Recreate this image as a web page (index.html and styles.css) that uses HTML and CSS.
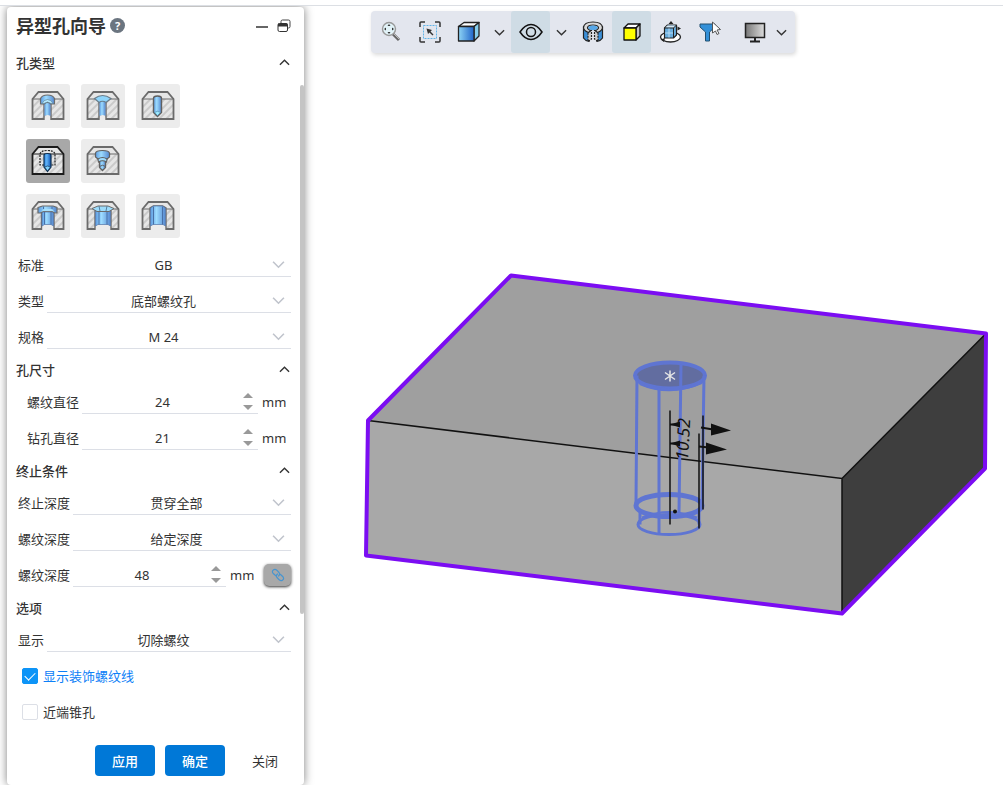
FILE: index.html
```html
<!DOCTYPE html>
<html lang="zh-CN">
<head>
  <meta charset="UTF-8">
  <title>异型孔向导</title>
  <link rel="stylesheet" href="styles.css">
</head>
<body>
  <!-- shared icon parts -->
  <svg class="defs" aria-hidden="true">
    <defs>
      <linearGradient id="steel">
        <stop offset="0" stop-color="#5d9be0"/>
        <stop offset="0.4" stop-color="#9ddcff"/>
        <stop offset="1" stop-color="#5588d0"/>
      </linearGradient>
      <linearGradient id="deep">
        <stop offset="0" stop-color="#2e86e0"/>
        <stop offset="0.4" stop-color="#62b4f8"/>
        <stop offset="1" stop-color="#0c50b0"/>
      </linearGradient>
      <linearGradient id="cubeFace">
        <stop offset="0" stop-color="#8ed4f5"/>
        <stop offset="1" stop-color="#1f63c8"/>
      </linearGradient>
      <linearGradient id="screen">
        <stop offset="0" stop-color="#777"/>
        <stop offset="1" stop-color="#ddd"/>
      </linearGradient>
      <pattern id="hatch" width="5" height="5" patternUnits="userSpaceOnUse" patternTransform="rotate(45)">
        <rect width="5" height="5" fill="#e6e6e6"/>
        <rect width="2" height="5" fill="#cacaca"/>
      </pattern>
      <symbol id="block" viewBox="0 0 44 44">
        <path d="M6.500 15L12.500 8H31.500L37.500 15Z" fill="#e6e6e6"/>
        <path d="M6.500 15H37.500V35H6.500Z" fill="url(#hatch)"/>
        <path d="M6.500 15H37.500" stroke="currentColor"/>
        <path d="M6.500 15L12.500 8H31.500L37.500 15V35H6.500Z" fill="none" stroke="currentColor" stroke-width="1.800"/>
      </symbol>
      <symbol id="chev" viewBox="0 0 12 12">
        <path d="M1 3.500L6 8.500L11 3.500" fill="none" stroke="currentColor" stroke-width="1.500"/>
      </symbol>
    </defs>
  </svg>

  <div class="workspace">
    <aside class="panel">
      <header class="panel-head">
        <h1>异型孔向导</h1>
        <button class="help" aria-label="帮助">?</button>
        <button class="head-btn" aria-label="最小化">
          <svg width="14" height="14" viewBox="0 0 14 14"><path d="M1 8H13" stroke="#333" stroke-width="1.500"/></svg>
        </button>
        <button class="head-btn" aria-label="浮动">
          <svg width="14" height="14" viewBox="0 0 14 14"><path d="M4 4V2.500Q4 1 5.500 1H11.500Q13 1 13 2.500V7.500Q13 9 11.500 9H10.500" fill="none" stroke="#444"/><rect x="1" y="4.500" width="9.500" height="8" rx="1.500" fill="#fff" stroke="#333"/><path d="M1 4.500H10.500V7.500H1Z" fill="#333"/></svg>
        </button>
      </header>

      <section>
        <div class="group-head">
          <h2>孔类型</h2>
          <button class="fold" aria-label="折叠"><svg width="11" height="11"><use href="#chev"/></svg></button>
        </div>
        <div class="hole-types">
          <button class="hole" aria-label="柱形沉头孔">
            <svg viewBox="0 0 44 44"><use href="#block"/>
              <path d="M18 37V33Q21.500 29.500 25 33V37Z" fill="#ececec"/>
              <path d="M18 36V17H25V36" fill="none" stroke="#6b6b6b" stroke-width="1.400"/>
              <path d="M18.500 17H24.500V32Q21.500 30 18.500 32Z" fill="url(#steel)"/>
              <path d="M14.500 14.500Q16 11 21.500 11Q27 11 28.500 14.500V20H25Q21.500 17 18 20H14.500Z" fill="url(#steel)" stroke="#6b6b6b" stroke-width="1.200"/>
              <path d="M16 19.500Q18 15.500 21.500 15.500Q25 15.500 27 19.500L25 19.500Q21.500 16.500 18 19.500Z" fill="#b9ecff" stroke="#5b8095" stroke-width="0.700"/></svg>
          </button>
          <button class="hole" aria-label="锥形沉头孔">
            <svg viewBox="0 0 44 44"><use href="#block"/>
              <path d="M18 37V33Q21.500 29.500 25 33V37Z" fill="#ececec"/>
              <path d="M18 36V17H25V36" fill="none" stroke="#6b6b6b" stroke-width="1.400"/>
              <path d="M18.500 16H24.500V32Q21.500 30 18.500 32Z" fill="url(#steel)"/>
              <path d="M13.500 14.500Q21.500 8.500 30 14.500L25 18.500Q21.500 16 18 18.500Z" fill="#8fd5fb" stroke="#6a7d8a" stroke-width="1.200"/></svg>
          </button>
          <button class="hole" aria-label="孔">
            <svg viewBox="0 0 44 44"><use href="#block"/>
              <path d="M17.500 14.500Q17.500 12 21.500 12Q25.500 12 25.500 14.500V28.500L21.500 32.500L17.500 28.500Z" fill="url(#steel)" stroke="#606060" stroke-width="1.400"/>
              <path d="M18.500 28.500Q21.500 26 24.500 28.500L21.500 31.500Z" fill="#9eeaff" stroke="#4a86a8" stroke-width="0.700"/></svg>
          </button>
          <button class="hole active" aria-label="直螺纹孔">
            <svg viewBox="0 0 44 44"><use href="#block"/>
              <path d="M18 26H14V15Q15 11.500 21.500 11.500Q28 11.500 29 15V26H25" fill="none" stroke="#222" stroke-width="1.200" stroke-dasharray="2 1"/>
              <path d="M18 16Q18 14.500 21.500 14.500Q25 14.500 25 16V28L21.500 32.500L18 28Z" fill="url(#deep)" stroke="#103050" stroke-width="1.200"/>
              <path d="M18.500 28Q21.500 26 24.500 28L21.500 32Z" fill="#7ed0ff" stroke="#103050" stroke-width="0.700"/></svg>
          </button>
          <button class="hole" aria-label="锥形螺纹孔">
            <svg viewBox="0 0 44 44"><use href="#block"/>
              <path d="M18.500 21H24.500V28.500L21.500 31.500L18.500 28.500Z" fill="url(#steel)" stroke="#606060" stroke-width="1.300"/>
              <path d="M18.500 27.500Q21.500 25 24.500 27.500" fill="none" stroke="#606060"/>
              <path d="M16.500 18H26.500L25.500 23Q21.500 20.500 17.500 23Z" fill="#9ddcff" stroke="#606060" stroke-width="1.200"/>
              <path d="M14.500 14Q15 11.500 21.500 11.500Q28 11.500 28.500 14V18L26 20Q21.500 17 17 20L14.500 18Z" fill="url(#steel)" stroke="#606060" stroke-width="1.200"/></svg>
          </button>
          <button class="hole row-start" aria-label="柱孔槽口">
            <svg viewBox="0 0 44 44"><use href="#block"/>
              <path d="M15.500 37V32L18 30.500H25.500L28 32V37Z" fill="#ececec"/>
              <path d="M15.500 36V18H28V36" fill="none" stroke="#6b6b6b" stroke-width="1.400"/>
              <path d="M16 18H27.500V32L25 30.500H18.500L16 32Z" fill="url(#steel)" stroke="#5577aa" stroke-width="0.700"/>
              <path d="M18.500 18V30.500M25 18V30.500" stroke="#4870a8"/>
              <path d="M12 13.500L16.500 12H27L31 13.500V19H28.500L26 17H17.500L14.500 19H12Z" fill="url(#steel)" stroke="#6b6b6b" stroke-width="1.200"/>
              <path d="M15 18Q17 15 19 15H25Q27 15 28.500 18L26 17H17.500Z" fill="#a8e0fb"/>
              <path d="M17.500 12.500V15M26 12.500V15" stroke="#4870a8"/></svg>
          </button>
          <button class="hole" aria-label="锥孔槽口">
            <svg viewBox="0 0 44 44"><use href="#block"/>
              <path d="M14 37V32L17 30.500H27L30 32V37Z" fill="#ececec"/>
              <path d="M14 36V17H30V36" fill="none" stroke="#6b6b6b" stroke-width="1.400"/>
              <path d="M14.500 17H29.500V32L27 30.500H17L14.500 32Z" fill="url(#steel)" stroke="#5577aa" stroke-width="0.700"/>
              <path d="M18 17V30.500M26 17V30.500" stroke="#4870a8"/>
              <path d="M11 14.500L17 12H27L33 14.500L28 17.500H16Z" fill="#9cdcfb" stroke="#6b6b6b"/>
              <path d="M18 12L19 17M26 12L25 17" stroke="#5580a0"/></svg>
          </button>
          <button class="hole" aria-label="槽口">
            <svg viewBox="0 0 44 44"><use href="#block"/>
              <path d="M14 37V32L17 30.500H27L30 32V37Z" fill="#ececec"/>
              <path d="M14 36V14L17.500 12H26.500L30 14V36" fill="none" stroke="#6b6b6b" stroke-width="1.400"/>
              <path d="M14.500 14L17.500 12H26.500L29.500 14V32L27 30.500H17L14.500 32Z" fill="url(#steel)" stroke="#5577aa" stroke-width="0.700"/>
              <path d="M17.500 12.500V30.500M26.500 12.500V30.500" stroke="#4870a8"/></svg>
          </button>
        </div>
        <div class="row">
          <label for="standard">标准</label>
          <div class="field"><select id="standard"><option>GB</option></select><svg class="arrow" width="13" height="13"><use href="#chev"/></svg></div>
        </div>
        <div class="row">
          <label for="type">类型</label>
          <div class="field"><select id="type"><option>底部螺纹孔</option></select><svg class="arrow" width="13" height="13"><use href="#chev"/></svg></div>
        </div>
        <div class="row">
          <label for="size">规格</label>
          <div class="field"><select id="size"><option>M 24</option></select><svg class="arrow" width="13" height="13"><use href="#chev"/></svg></div>
        </div>
      </section>

      <section>
        <div class="group-head">
          <h2>孔尺寸</h2>
          <button class="fold" aria-label="折叠"><svg width="11" height="11"><use href="#chev"/></svg></button>
        </div>
        <div class="row indent">
          <label for="threadDia">螺纹直径</label>
          <div class="field"><input type="text" id="threadDia" value="24">
            <div class="spin"><button class="up" aria-label="增加"></button><button class="down" aria-label="减少"></button></div></div>
          <span class="unit">mm</span>
        </div>
        <div class="row indent">
          <label for="drillDia">钻孔直径</label>
          <div class="field"><input type="text" id="drillDia" value="21">
            <div class="spin"><button class="up" aria-label="增加"></button><button class="down" aria-label="减少"></button></div></div>
          <span class="unit">mm</span>
        </div>
      </section>

      <section>
        <div class="group-head">
          <h2>终止条件</h2>
          <button class="fold" aria-label="折叠"><svg width="11" height="11"><use href="#chev"/></svg></button>
        </div>
        <div class="row">
          <label for="endDepth">终止深度</label>
          <div class="field"><select id="endDepth"><option>贯穿全部</option></select><svg class="arrow" width="13" height="13"><use href="#chev"/></svg></div>
        </div>
        <div class="row">
          <label for="threadMode">螺纹深度</label>
          <div class="field"><select id="threadMode"><option>给定深度</option></select><svg class="arrow" width="13" height="13"><use href="#chev"/></svg></div>
        </div>
        <div class="row">
          <label for="threadDepth">螺纹深度</label>
          <div class="field"><input type="text" id="threadDepth" value="48">
            <div class="spin"><button class="up" aria-label="增加"></button><button class="down" aria-label="减少"></button></div></div>
          <span class="unit">mm</span>
          <button class="link-btn" aria-label="关联">
            <svg width="14" height="14" viewBox="0 0 14 14" fill="none" stroke="#4795d0" stroke-width="1.200" stroke-linecap="round"><path d="M4.500 7.500L2.300 5.500Q0.500 3.500 2.300 2Q4 0.500 5.800 2.200L8 4.500Q9.500 6.500 7.500 8"/><path d="M9.500 6.500L11.700 8.500Q13.500 10.500 11.700 12Q10 13.500 8.200 11.800L6 9.500Q4.500 7.500 6.500 6"/></svg>
          </button>
        </div>
      </section>

      <section>
        <div class="group-head">
          <h2>选项</h2>
          <button class="fold" aria-label="折叠"><svg width="11" height="11"><use href="#chev"/></svg></button>
        </div>
        <div class="row">
          <label for="display">显示</label>
          <div class="field"><select id="display"><option>切除螺纹</option></select><svg class="arrow" width="13" height="13"><use href="#chev"/></svg></div>
        </div>
        <div class="check-row">
          <input type="checkbox" id="cosmetic" checked><label for="cosmetic">显示装饰螺纹线</label>
        </div>
        <div class="check-row">
          <input type="checkbox" id="nearCsk"><label for="nearCsk">近端锥孔</label>
        </div>
      </section>

      <footer class="actions">
        <button class="primary">应用</button>
        <button class="primary">确定</button>
        <button class="plain">关闭</button>
      </footer>
      <div class="scroll-thumb"></div>
    </aside>

    <main class="stage">
      <nav class="toolbar">
        <button class="tool" aria-label="缩放">
          <svg width="24" height="24" viewBox="0 0 24 24"><path d="M14 14L20 20" stroke="#666" stroke-width="3"/><path d="M15 14L20 19" stroke="#bbb"/><circle cx="10" cy="9" r="6.500" fill="#e2f3f8" stroke="#999" stroke-width="1.400"/><path d="M10 4L8.500 6H11.500ZM10 14L8.500 12H11.500ZM5 9L7 7.500V10.500ZM15 9L13 7.500V10.500Z" fill="#333"/></svg>
        </button>
        <button class="tool" aria-label="框选">
          <svg width="24" height="24" viewBox="0 0 24 24" fill="none"><path d="M2 7V3Q2 2 3 2H7M17 2H21Q22 2 22 3V7M22 17V21Q22 22 21 22H17M7 22H3Q2 22 2 21V17" stroke="#333" stroke-width="1.500"/><rect x="5.500" y="5.500" width="13" height="13" stroke="#62b5e8" stroke-dasharray="2 1"/><path d="M8.500 8.500L14 10L12.500 11.500L15.500 14.500L14.500 15.500L11.500 12.500L10 14Z" fill="#333"/></svg>
        </button>
        <button class="tool" aria-label="视图方向">
          <svg width="24" height="24" viewBox="0 0 24 24" stroke="#222" stroke-width="1.300" stroke-linejoin="round"><path d="M1.500 6.500L7 2.500H22L17 6.500Z" fill="#fff"/><path d="M17 6.500L22 2.500V16L17 21Z" fill="#86cdec"/><path d="M1.500 6.500H17V21H1.500Z" fill="url(#cubeFace)"/></svg>
        </button>
        <button class="more" aria-label="更多"><svg width="11" height="11"><use href="#chev"/></svg></button>
        <button class="tool on" aria-label="显示">
          <svg width="24" height="24" viewBox="0 0 24 24" fill="none" stroke="#111" stroke-width="1.500"><path d="M1 12Q6 4.500 12 4.500T23 12Q18 19.500 12 19.500T1 12Z"/><circle cx="12" cy="12" r="4.500"/></svg>
        </button>
        <button class="more" aria-label="更多"><svg width="11" height="11"><use href="#chev"/></svg></button>
        <button class="tool" aria-label="剖面">
          <svg width="24" height="24" viewBox="0 0 24 24" stroke="#222" stroke-width="1.200" stroke-linejoin="round">
            <path d="M2.500 6.500V18Q4 20.500 8 21.500V11H6Z" fill="#3d8fd6"/>
            <path d="M21.500 6.500V18Q20 20.500 16 21.500V11H18Z" fill="#3d8fd6"/>
            <path d="M7 12L10.500 10V19L7 21.500ZM17 12L13.500 10V19L17 21.500Z" fill="#ccc" stroke-dasharray="2 1"/>
            <path d="M7.500 12.500Q2.500 10.500 2.500 7.500Q3 2 12 2T21.500 7.500Q21.500 10.500 16.500 12.500L14 10.500Q17.500 9.500 17.500 7.500Q17 5 12 5T6.500 7.500Q6.500 9.500 10 10.500Z" fill="#d8d8d8"/>
            <path d="M7 7.500Q8 5.500 12 5.500T17 7.500Q16.500 9.500 13.500 10H10.500Q7.500 9.500 7 7.500Z" fill="#58a8e8" stroke="none"/></svg>
        </button>
        <button class="tool on" aria-label="着色">
          <svg width="24" height="24" viewBox="0 0 24 24" stroke="#111" stroke-width="1.300" stroke-linejoin="round"><path d="M4 8L8 4H20L16 8Z" fill="#fff"/><path d="M16 8L20 4V16L16 20Z" fill="#c5c5c5"/><path d="M4 8H16V20H4Z" fill="#ff0"/></svg>
        </button>
        <button class="tool" aria-label="旋转视图">
          <svg width="24" height="24" viewBox="0 0 24 24"><ellipse cx="11.500" cy="17" rx="10" ry="5" fill="#fff" stroke="#222" stroke-width="1.300"/><path d="M5.500 8L8.500 5H17.500V15L14.500 18H5.500Z" fill="#6aaede" stroke="#222" stroke-width="1.200" stroke-linejoin="round"/><path d="M6 7.500L8.500 5.500H17L14.500 8Z" fill="#d5e8f5"/><path d="M5.500 8H14.500V18M14.500 8L17.500 5" fill="none" stroke="#222"/><path d="M6 13H14M10 8.500V17.500" stroke="#b7dcf5"/><path d="M12 1L14.500 4H9.500ZM22 8.500L18.500 6.500V10.500ZM1.500 19.500L6 18L5 22Z" fill="#222"/></svg>
        </button>
        <button class="tool" aria-label="过滤">
          <svg width="24" height="24" viewBox="0 0 24 24"><path d="M2 4H17V7L11.500 12V21H7.500V12L2 7Z" fill="#3390d8" stroke="#225070"/><path d="M14.500 2L22.500 9.500L19 10L21 13.500L19 14.500L17.500 11L14.500 13Z" fill="#fff" stroke="#555"/></svg>
        </button>
        <button class="tool screen" aria-label="显示设置">
          <svg width="24" height="24" viewBox="0 0 24 24"><rect x="2.500" y="3.500" width="19" height="14" fill="url(#screen)" stroke="#222" stroke-width="1.500"/><path d="M12 18V21M7 21.500H17" stroke="#222" stroke-width="2"/></svg>
        </button>
        <button class="more narrow" aria-label="更多"><svg width="11" height="11"><use href="#chev"/></svg></button>
      </nav>

      <svg class="model" viewBox="304 54 699 731">
        <path d="M511 276L986 334L842 479L368 421Z" fill="#9f9f9f"/>
        <path d="M368 421L842 479V614L366 556Z" fill="#a8a8a8"/>
        <path d="M842 479L986 334L985 469L842 614Z" fill="#3e3e3e"/>
        <path d="M368 421L842 479L986 334M842 479V614" fill="none" stroke="#111" stroke-width="1.500"/>
        <path d="M511 276L986 334L985 469L842 614L366 556L368 421Z" fill="none" stroke="#7b0df2" stroke-width="4" stroke-linejoin="round"/>

        <!-- hole preview -->
        <g fill="none" stroke="#5f75d2" stroke-width="3">
          <ellipse cx="670" cy="376" rx="35" ry="13" fill="#626da0" stroke-width="4"/>
          <path d="M640 384Q670 397 702 383"/>
          <path d="M637 376L636 505M659 388V534M681 365L679 513M704 376L702 507"/>
          <ellipse cx="669" cy="506" rx="33" ry="11" stroke-width="5"/>
          <ellipse cx="669" cy="525" rx="31" ry="10"/>
          <path d="M640 512V525M699 512V525"/>
          <path d="M642 518Q669 507 697 518" stroke-width="2"/>
        </g>
        <path d="M670 371V382M665 373L675 380M675 373L665 380" stroke="#e6e6e6" stroke-width="1.500"/>
        <path d="M670 411V525M703 416V510M699 434V529" stroke="#111" stroke-width="1.500"/>
        <path d="M701 428L713 430M699 447L709 448M670 425H680M670 444H680" stroke="#111" stroke-width="2"/>
        <path d="M711 424L731 431L711 436ZM706 443L727 450L706 455ZM670 425L680 422V428ZM670 444L680 441V447Z" fill="#111"/>
        <circle cx="675" cy="512" r="2" fill="#111"/>
        <text class="dim" transform="translate(688 461) rotate(-87)">10.52</text>
      </svg>
    </main>
  </div>
</body>
</html>
```

FILE: styles.css
```css
* {
  margin: 0;
  padding: 0;
  box-sizing: border-box;
}

body {
  font-family: "Noto Sans", "Noto Sans CJK SC", sans-serif;
  font-size: 13px;
  line-height: 18px;
  color: #333;
  background: #fff;
  height: 100vh;
  padding: 5px 0 8px;
}

button, input, select {
  font: inherit;
  color: inherit;
  border: none;
  background: none;
}

button {
  cursor: pointer;
}

.defs {
  position: absolute;
  width: 0;
  height: 0;
}

.workspace {
  display: flex;
  height: 100%;
  border-top: 1px solid #dcdfe4;
  overflow: hidden;
}

/* Panel */
.panel {
  position: relative;
  z-index: 1;
  flex: 0 0 297px;
  min-width: 0;
  margin: 1px 0 0 7px;
  background: #fff;
  border-radius: 4px;
  box-shadow: 0 0 10px rgba(0, 0, 0, 0.5);
}

.panel-head {
  display: flex;
  align-items: center;
  gap: 8px;
  height: 41px;
  padding: 0 13px 4px 9px;
}

.panel-head h1 {
  font-size: 18px;
  line-height: 24px;
  font-weight: 700;
}

.help {
  width: 15px;
  height: 15px;
  border-radius: 50%;
  background: #6b7580;
  color: #fff;
  font-size: 11px;
  font-weight: 700;
  line-height: 15px;
  margin: 0 auto 0 -4px;
}

.head-btn {
  width: 14px;
  height: 14px;
}

.head-btn svg,
.fold svg,
.more svg,
.tool svg {
  display: block;
  margin: auto;
}

.group-head {
  display: flex;
  align-items: center;
  justify-content: space-between;
  height: 29px;
  padding: 0 13px 0 9px;
}

.group-head h2 {
  font-size: 13px;
  font-weight: 500;
}

.fold {
  width: 12px;
  transform: rotate(180deg);
}

.hole-types {
  display: grid;
  grid-template-columns: repeat(3, 44px);
  gap: 11px;
  padding: 7px 19px 9px;
}

.hole {
  height: 44px;
  border-radius: 3px;
  background: #ececec;
  color: #6b6b6b;
}

.hole svg {
  display: block;
}

.hole.active {
  background: #a8a8a8;
  color: #1c1c1c;
}

.hole.row-start {
  grid-column: 1;
}

.row {
  display: flex;
  align-items: center;
  gap: 3px;
  height: 36px;
  padding: 0 13px 0 11px;
}

.row.indent {
  padding-left: 20px;
}

.field {
  flex: 1;
  display: flex;
  align-items: center;
  min-width: 0;
  height: 24px;
  border-bottom: 1px solid #dcdfe6;
}

.field select,
.field input {
  flex: 1;
  min-width: 0;
  height: 23px;
  outline: none;
  text-align: center;
}

.field select {
  appearance: none;
  text-align-last: center;
  padding-left: 8px;
}

.arrow {
  color: #c0c4cc;
  margin-right: 6px;
}

.spin {
  display: flex;
  flex-direction: column;
  gap: 7px;
  padding: 0 5px 0 0;
}

.spin button {
  width: 10px;
  height: 5px;
  background: #999;
}

.up {
  clip-path: polygon(50% 0, 100% 100%, 0 100%);
}

.down {
  clip-path: polygon(0 0, 100% 0, 50% 100%);
}

.unit {
  width: 30px;
  padding-left: 1px;
}

.link-btn {
  width: 27px;
  height: 22px;
  margin-left: 2px;
  border-radius: 5px;
  background: #a8a8a8;
  box-shadow: 0 1px 3px #333;
}

.link-btn svg {
  display: block;
  margin: auto;
}

.check-row {
  display: flex;
  align-items: center;
  gap: 5px;
  height: 36px;
  padding-left: 15px;
}

.check-row input {
  appearance: none;
  width: 16px;
  height: 16px;
  border: 1px solid #dcdfe6;
  border-radius: 2px;
}

.check-row input:checked {
  display: grid;
  place-items: center;
  background: #0d94f7;
  border-color: #0d94f7;
}

.check-row input:checked::before {
  content: '';
  width: 9px;
  height: 5px;
  border: solid #fff;
  border-width: 0 0 1px 1px;
  transform: translateY(-1px) rotate(-45deg);
}

.check-row input:checked + label {
  color: #0d80f7;
}

.actions {
  display: flex;
  justify-content: flex-end;
  gap: 10px;
  padding: 15px 9px 0 0;
}

.actions button {
  width: 60px;
  height: 31px;
  border-radius: 4px;
}

.actions .primary {
  background: #0078d7;
  color: #fff;
  font-weight: 500;
}

/* overlay scrollbar */
.scroll-thumb {
  position: absolute;
  top: 10%;
  right: 0;
  width: 4px;
  height: 68%;
  border-radius: 2px;
  background: #c4c4c4;
}

/* 3D view */
.stage {
  flex: 1;
  min-width: 0;
  display: flex;
  flex-direction: column;
}

.toolbar {
  display: flex;
  align-self: flex-start;
  margin: 5px 0 0 67px;
  padding-right: 6px;
  background: #e3e6ee;
  border-radius: 4px;
  box-shadow: 1px 2px 4px rgba(0, 0, 0, 0.15);
}

.tool {
  width: 39px;
  height: 42px;
  border-radius: 3px;
}

.tool.on {
  background: #cfdce5;
}

.tool.screen {
  margin-left: 6px;
}

.more {
  width: 23px;
}

.more.narrow {
  width: 15px;
}

.model {
  flex: 1;
  min-height: 0;
  width: 100%;
}

.dim {
  font-size: 17px;
  font-style: italic;
  fill: #111;
}
```
